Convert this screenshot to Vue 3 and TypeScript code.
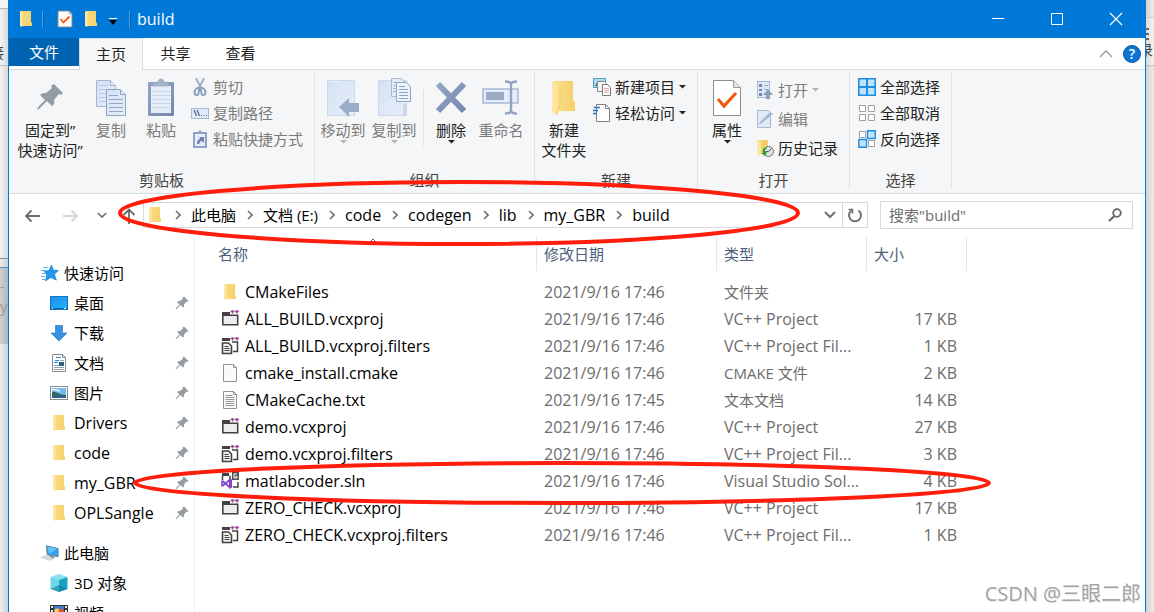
<script setup lang="ts">
interface Crumb { label: string; latin: boolean }
interface NavItem { label: string; icon: string; latin: boolean }
interface FileRow { name: string; icon: string; date: string; type: string; typeLatin: boolean; size: string }

const crumbs: Crumb[] = [
  { label: '此电脑', latin: false },
  { label: '文档 (E:)', latin: false },
  { label: 'code', latin: true },
  { label: 'codegen', latin: true },
  { label: 'lib', latin: true },
  { label: 'my_GBR', latin: true },
  { label: 'build', latin: true },
]

const pinned: NavItem[] = [
  { label: '桌面', icon: 'desktop', latin: false },
  { label: '下载', icon: 'download', latin: false },
  { label: '文档', icon: 'document', latin: false },
  { label: '图片', icon: 'picture', latin: false },
  { label: 'Drivers', icon: 'folder', latin: true },
  { label: 'code', icon: 'folder', latin: true },
  { label: 'my_GBR', icon: 'folder', latin: true },
  { label: 'OPLSangle', icon: 'folder', latin: true },
]

const computer: NavItem[] = [
  { label: '3D 对象', icon: 'cube', latin: false },
  { label: '视频', icon: 'video', latin: false },
]

const row = (name: string, icon: string, type: string, size: string, time = '17:46'): FileRow => ({
  name, icon, type, size, date: `2021/9/16 ${time}`, typeLatin: /^V/.test(type),
})

const files: FileRow[] = [
  row('CMakeFiles', 'folder', '文件夹', ''),
  row('ALL_BUILD.vcxproj', 'project', 'VC++ Project', '17 KB'),
  row('ALL_BUILD.vcxproj.filters', 'filters', 'VC++ Project Fil...', '1 KB'),
  row('cmake_install.cmake', 'blank', 'CMAKE 文件', '2 KB'),
  row('CMakeCache.txt', 'text', '文本文档', '14 KB', '17:45'),
  row('demo.vcxproj', 'project', 'VC++ Project', '27 KB'),
  row('demo.vcxproj.filters', 'filters', 'VC++ Project Fil...', '3 KB'),
  row('matlabcoder.sln', 'solution', 'Visual Studio Sol...', '4 KB'),
  row('ZERO_CHECK.vcxproj', 'project', 'VC++ Project', '17 KB'),
  row('ZERO_CHECK.vcxproj.filters', 'filters', 'VC++ Project Fil...', '1 KB'),
]
</script>

<template>
  <div class="screen">
    <svg class="defs" aria-hidden="true">
      <defs>
        <linearGradient id="gFold" x1="0" x2="1"><stop offset="0" stop-color="#fbdf8c" /><stop offset="1" stop-color="#f5cf69" /></linearGradient>
        <linearGradient id="gFlap" x1="0" x2="1"><stop offset="0" stop-color="#ffe9a8" /><stop offset="1" stop-color="#fbdd84" /></linearGradient>
        <linearGradient id="gBlue" x1="0" x2="1" y2="1"><stop offset="0" stop-color="#1f8fea" /><stop offset="1" stop-color="#1fb4ff" /></linearGradient>
        <linearGradient id="gSheet" x1="0" x2="1" y2="1"><stop offset="0" stop-color="#d5e1f3" /><stop offset="1" stop-color="#e6eefa" /></linearGradient>
        <linearGradient id="gSlate" x1="0" x2="1" y2="1"><stop offset="0" stop-color="#93a5c5" /><stop offset="1" stop-color="#7488ae" /></linearGradient>
      </defs>
      <symbol id="folder" viewBox="0 0 18 18">
        <path d="M4 1h10v11l1 1v3H4z" fill="url(#gFold)" />
        <path d="M3 1l4 2v11l-2 3-2-1z" fill="url(#gFlap)" />
        <path d="M7 3v11" stroke="#efcb70" stroke-width=".6" />
      </symbol>
      <symbol id="bigfolder" viewBox="0 0 28 40">
        <path d="M3 4h20v19l2 2v9H5z" fill="url(#gFold)" />
        <path d="M2 4l8 5v18l-3 11-5-3z" fill="url(#gFlap)" />
        <path d="M10 9v18l-3 11" fill="none" stroke="#edc768" stroke-width=".7" />
      </symbol>
      <symbol id="check" viewBox="0 0 18 18">
        <path d="M2 1h11l3 3v13H2z" fill="#fff" stroke="#8a8a8a" />
        <path d="M13 1v3h3" fill="#ddd" stroke="#999" stroke-width=".7" />
        <path d="M4.500 9l3 3.500 6-6" fill="none" stroke="#ee5a12" stroke-width="1.800" />
      </symbol>
      <symbol id="pin" viewBox="0 0 28 28">
        <path d="M18 1l9 9-2 2-2-1-5 6c1 3 0 5-2 6l-5-5-8 8-2 1 1-3 7-7-5-5c2-2 4-2 6-2l6-5-1-2z" fill="#949da3" />
      </symbol>
      <symbol id="copy" viewBox="0 0 32 40">
        <g fill="url(#gSheet)" stroke="#a4b5d2">
          <path d="M1.500 3.500h14l5 5v21h-19z" />
          <path d="M15.500 3.500v5h5" />
          <path d="M4 8.500h9M4 12.500h14M4 16.500h14M4 20.500h14M4 24.500h14" stroke="#b9c8e0" />
          <path d="M11.500 12.500h14l5 5v21h-19z" stroke="#8ea3c8" />
          <path d="M25.500 12.500v5h5" stroke="#8ea3c8" />
          <path d="M14 18.500h9M14 22.500h14M14 26.500h14M14 30.500h14M14 34.500h14" stroke="#93a6c8" />
        </g>
      </symbol>
      <symbol id="paste" viewBox="0 0 28 40">
        <rect x="1" y="5" width="26" height="34" rx="1" fill="url(#gSlate)" />
        <rect x="4" y="9" width="20" height="27" fill="#e5edf9" />
        <path d="M5 14.500h18M5 18.500h18M5 22.500h18M5 26.500h18M5 30.500h18" stroke="#c9d7ec" />
        <path d="M6 9V6l5-1c0-4 6-4 6 0l5 1v3z" fill="#a8b4ca" stroke="#8c9cba" stroke-width=".6" />
      </symbol>
      <symbol id="cut" viewBox="0 0 18 18">
        <path d="M5 0l5 10M13 0L8 10" fill="none" stroke="#a3afc4" stroke-width="2" />
        <path d="M8.500 10c-1-1-5 1-5 4 0 4 4 4 4 1zM9.500 10c1-1 5 1 5 4 0 4-4 4-4 1z" fill="none" stroke="#8ca0c2" stroke-width="2" />
      </symbol>
      <symbol id="path" viewBox="0 0 18 18">
        <rect x=".5" y="4.500" width="17" height="10" fill="#e2eaf7" stroke="#a9b9d5" />
        <path d="M3 6l2.500 6M6 6l2.500 6" stroke="#536b95" stroke-width="1.300" />
        <path d="M10 11.500h1M12.500 11.500h1M15 11.500h1" stroke="#536b95" />
      </symbol>
      <symbol id="shortcut" viewBox="0 0 18 18">
        <rect x="3" y="3" width="12" height="14" fill="#e7eef9" stroke="#8599bd" stroke-width="1.800" />
        <path d="M6 3.500V2h1.500c0-2 3-2 3 0H12v1.500z" fill="#8ea0be" />
        <path d="M6 14c0-3 1-5 3-5V7.500H7.500V7H13v5.500h-1L11 11c-2 0-2 1-3 3z" fill="#6c83ad" />
      </symbol>
      <symbol id="move" viewBox="0 0 34 40">
        <rect x="1.500" y="3.500" width="27" height="35" fill="url(#gSheet)" stroke="#ccd8eb" />
        <path d="M3 4.500h10" stroke="#edf3fb" />
        <path d="M13 30l10-9v5h10v9H23v5z" fill="#9cadc9" />
      </symbol>
      <symbol id="copyto" viewBox="0 0 34 40">
        <rect x="1.500" y="3.500" width="28" height="35" fill="url(#gSheet)" stroke="#ccd8eb" />
        <path d="M26 38V29l2-3h2v12z" fill="#cbd7ea" />
        <path d="M14.500 1.500h10l4 4v14h-14z" fill="#e3ebf8" stroke="#a9b9d4" />
        <path d="M16 5.500h7M16 8.500h3M16 11.500h3M16 14.500h3" stroke="#a9b9d4" />
        <path d="M19.500 5.500h10l4 4v15h-14z" fill="#edf3fc" stroke="#8fa4c7" />
        <path d="M22 9.500h6M22 12.500h9M22 15.500h9M22 18.500h9M22 21.500h9" stroke="#8fa4c7" />
      </symbol>
      <symbol id="delete" viewBox="0 0 32 40">
        <path d="M3 7l26 27M29 7L3 34" stroke="url(#gSlate)" stroke-width="6" />
      </symbol>
      <symbol id="rename" viewBox="0 0 38 40">
        <rect x="1" y="12" width="35" height="14" fill="#e4ecf9" stroke="#a8b9d6" stroke-width="1.500" />
        <rect x="4" y="15" width="18" height="8" fill="#9bacc9" />
        <path d="M23 4.500c4 0 6 1 6 3v26c0 2-2 3-6 3M35 4.500c-4 0-6 1-6 3M29 33.500c0 2 2 3 6 3" fill="none" stroke="#91a3c3" stroke-width="2.400" />
      </symbol>
      <symbol id="newitem" viewBox="0 0 18 18">
        <rect x=".5" y=".5" width="12" height="9" fill="#a9dcf5" stroke="#5b9cc0" />
        <path d="M2 8l3-5 3 5z" fill="#38795c" />
        <path d="M4.500 3.500h7l2 2v8h-9z" fill="#f4f4f4" stroke="#888" />
        <path d="M9.500 6.500h5l3 3v8h-8z" fill="#fff" stroke="#777" />
        <path d="M11 10.500h5M11 12.500h5M11 14.500h5" stroke="#dca7a4" />
      </symbol>
      <symbol id="easy" viewBox="0 0 18 18">
        <path d="M3.500.500h9l4 4v13h-13z" fill="#fff" stroke="#808080" />
        <path d="M12.500.500v4h4" fill="none" stroke="#808080" />
        <path d="M1 3.500h6M0 6.500h5M-1 9.500h5" stroke="#2776bd" stroke-width="1.400" />
      </symbol>
      <symbol id="properties" viewBox="0 0 30 40">
        <path d="M1.500 3.500h20l7 7v28h-27z" fill="#fff" stroke="#8c8c8c" />
        <path d="M21.500 3.500v7h7" fill="#e4e4e4" stroke="#999" />
        <path d="M6 22l6 7 12-13" fill="none" stroke="#ed5b12" stroke-width="3.200" />
      </symbol>
      <symbol id="open" viewBox="0 0 18 18">
        <rect x="1.500" y=".5" width="12" height="16" fill="#dfe8f6" stroke="#a8b8d2" />
        <path d="M3 3h3v3H3zM3 8h3v2H3zM3 12h3v3H3z" fill="#7388ac" />
        <path d="M8 4.500h4M8 8.500h4" stroke="#9dafcb" />
        <path d="M7 14l5-6 5 6h-3v4h-4v-4z" fill="#8c9fbe" />
      </symbol>
      <symbol id="edit" viewBox="0 0 18 18">
        <path d="M1.500.500h11l2 2v15h-13z" fill="#e2eaf7" stroke="#a8b8d2" />
        <path d="M3 15l1-3L14 2l3 2L6 13z" fill="#a9b9d3" />
      </symbol>
      <symbol id="history" viewBox="0 0 18 18">
        <path d="M2 1h10v14H4z" fill="#f5cf6d" /><path d="M1 1l4 2v12l-2 2-2-1z" fill="#ffe8a6" />
        <circle cx="12.500" cy="12.500" r="5" fill="#dce1df" stroke="#737b77" />
        <path d="M12.500 12.500l3-3M12.500 12.500h-3" stroke="#555" />
        <path d="M10 8c-3 1-4 3-3 6l-2 0 4 3 2-4H9c0-2 0-3 2-4z" fill="#26a331" />
      </symbol>
      <symbol id="selall" viewBox="0 0 18 18">
        <path d="M.8.800h16.400v16.400H.8z" fill="#bfe3fb" stroke="#1f8de0" stroke-width="1.600" />
        <path d="M9 1v16M1 9h16" stroke="#1f8de0" stroke-width="2" />
      </symbol>
      <symbol id="selnone" viewBox="0 0 18 18">
        <path d="M1.500 1.500h6v6h-6zM10.500 1.500h6v6h-6zM1.500 10.500h6v6h-6zM10.500 10.500h6v6h-6z" fill="#fff" stroke="#a0a0a0" />
      </symbol>
      <symbol id="selinv" viewBox="0 0 18 18">
        <path d="M1.500 1.500h6v6h-6zM10.500 10.500h6v6h-6z" fill="#fff" stroke="#a0a0a0" />
        <path d="M9.500.800h7.700v7.700H9.500zM.8 9.500h7.700v7.700H.8z" fill="#bfe3fb" stroke="#1f8de0" stroke-width="1.400" />
      </symbol>
      <symbol id="star" viewBox="0 0 18 18">
        <path d="M10.500 1l1.800 5 5.200.5-4 3.700 1.800 6L10 13.500 4.500 17l1.200-6.200L3 7l5-.5z" fill="#2298ea" stroke="#137bcb" stroke-width=".6" />
        <path d="M2 3.500h5M0 6.500h4M1 9.500h3M0 12.500h4M1 15.500h3" stroke="#5ab5f2" />
      </symbol>
      <symbol id="desktop" viewBox="0 0 18 18">
        <rect x=".5" y="2.500" width="17" height="13" fill="url(#gBlue)" stroke="#1374bd" />
        <path d="M1 14.500h16" stroke="#0f5e9d" /><path d="M2 14.500h1M14 14.500h2" stroke="#fff" />
      </symbol>
      <symbol id="download" viewBox="0 0 18 18"><path d="M5.500 1.500h7V9H17l-8 8-8-8h4.500z" fill="#3793e2" stroke="#2a7bc8" stroke-width=".7" /></symbol>
      <symbol id="document" viewBox="0 0 18 18">
        <path d="M2.500.500h10l3 3v14h-13z" fill="#fff" stroke="#8c8c8c" /><path d="M12.500.500v3h3" fill="none" stroke="#8c8c8c" />
        <path d="M6 3.500h5M5 6.500h4M4 8.500h4" stroke="#1e8fd5" /><path d="M10 6.500h4M4 11.500h5M4 13.500h10M4 15.500h10" stroke="#8ba3b1" /><path d="M9 8h5v4H9z" fill="#2e6184" />
      </symbol>
      <symbol id="picture" viewBox="0 0 18 18">
        <rect x=".5" y="2.500" width="17" height="13" fill="#fff" stroke="#8c8c8c" /><path d="M2 4h14v10H2z" fill="#75b9ee" />
        <path d="M2 8c5-1 6 3 14 3v3H2z" fill="#2f6a63" /><path d="M2 12c5-1 8 0 14 0v2H2z" fill="#2c628f" /><path d="M2 6c3-2 5 1 8 1" fill="none" stroke="#e7f5ff" stroke-width="1.500" />
      </symbol>
      <symbol id="pc" viewBox="0 0 20 18">
        <path d="M6 1l13 3v9L7 11z" fill="#29a7f4" stroke="#64737d" /><path d="M7 2l11 2-9 6z" fill="#61c4fb" />
        <path d="M10 12l5 1v2l-5-1z" fill="#8b969d" /><path d="M0 14l5-2 9 3-4 2z" fill="#dde2e5" stroke="#aab2b7" stroke-width=".7" />
      </symbol>
      <symbol id="cube" viewBox="0 0 18 18">
        <path d="M9 0l8.500 3L9 6 .5 3z" fill="#89e0ef" /><path d="M.5 3L9 6v12L.5 15z" fill="#6ed6e6" /><path d="M17.500 3L9 6v12l8.500-3z" fill="#17a3c4" /><path d="M.5 15L9 11l8.500 4L9 18z" fill="#0f7f9f" opacity=".6" />
      </symbol>
      <symbol id="video" viewBox="0 0 18 18">
        <path d="M0 1h18v16H0z" fill="#343434" /><path d="M4 2h10v13H4z" fill="#3d78d3" /><path d="M2 2v15M16 2v15" stroke="#fff" stroke-width="1.800" stroke-dasharray="2 2" />
        <circle cx="7" cy="7" r="2.500" fill="#ffd34d" /><circle cx="11" cy="7" r="2.500" fill="#e05a2c" /><path d="M4 10h10v4H4z" fill="#43a047" />
      </symbol>
      <symbol id="project" viewBox="0 0 18 18">
        <path d="M1 2h8v4H1z" fill="#424242" /><path d="M1.800 5.200h14.900v9.600H1.800z" fill="#ececef" stroke="#424242" stroke-width="1.600" />
        <path d="M9 0h9v4H9z" fill="#fff" /><path d="M9.500 1.500h4M11.500-.5v4M14 1.500h4M16-.5v4" stroke="#9b4f96" stroke-width="1.500" />
      </symbol>
      <symbol id="filters" viewBox="0 0 18 18">
        <path d="M1 1h8v3H1z" fill="#424242" /><path d="M11 5h5.500v9.500H12" fill="none" stroke="#424242" stroke-width="1.500" />
        <path d="M1.500 6h6l3 3v7.500h-9z" fill="#f0eff1" stroke="#424242" stroke-width="1.600" /><path d="M3.500 9.500h4M3.500 11.500h5M3.500 13.500h5" stroke="#424242" />
        <path d="M9.500 1.500h4M11.500-.5v4M14 1.500h4M16-.5v4" stroke="#9b4f96" stroke-width="1.500" />
      </symbol>
      <symbol id="blank" viewBox="0 0 18 18">
        <path d="M2.500.500h10l3 3v14h-13z" fill="#fafafa" stroke="#929292" /><path d="M12.500.500v3h3" fill="none" stroke="#929292" />
      </symbol>
      <symbol id="text" viewBox="0 0 18 18">
        <path d="M2.500.500h10l3 3v14h-13z" fill="#fafafa" stroke="#929292" /><path d="M12.500.500v3h3" fill="none" stroke="#929292" />
        <path d="M4.500 4.500h7M4.500 6.500h9M4.500 8.500h9M4.500 10.500h9M4.500 12.500h9M4.500 14.500h9" stroke="#8d8d8d" stroke-width=".9" />
      </symbol>
      <symbol id="solution" viewBox="0 0 18 18">
        <path d="M1 1h7v3H1z" fill="#424242" /><path d="M1.500 3v5M9 3.500v5M17 10v5h-5" fill="none" stroke="#424242" stroke-width="1.500" />
        <path d="M11 0h7v8h-7z" fill="#555" /><path d="M16 2h-3v4h3V4.500h-1.500" fill="none" stroke="#fff" />
        <path d="M1.500 9l7 6M1.500 14l7-6" stroke="#8445c9" stroke-width="1.700" /><path d="M8 6l3 1.500v8L8 17z" fill="#8445c9" /><path d="M1 8.500v6" stroke="#8445c9" stroke-width="1.600" />
      </symbol>
      <symbol id="chev" viewBox="0 0 6 10"><path d="M1 1l4 4-4 4" fill="none" stroke="#707070" stroke-width="1.600" /></symbol>
      <symbol id="down" viewBox="0 0 12 8"><path d="M1 1l5 5 5-5" fill="none" stroke="#707070" stroke-width="2" /></symbol>
      <symbol id="tri" viewBox="0 0 7 4"><path d="M0 0h7L3.500 3.500z" fill="currentColor" /></symbol>
    </svg>

    <div class="behind left" aria-hidden="true">
      <div class="b1"></div><div class="b2"><span>接</span></div><div class="b3"></div><div class="b4"></div>
      <div class="b5"><span>-</span><span>y</span></div><div class="b6"></div>
    </div>

    <main class="window">
      <header class="title">
        <svg class="s18"><use href="#folder" /></svg>
        <i class="tsep"></i>
        <button class="quick" aria-label="属性"><svg class="s18"><use href="#check" /></svg></button>
        <button class="quick" aria-label="新建文件夹"><svg class="s18"><use href="#folder" /></svg></button>
        <button class="quick more" aria-label="自定义快速访问工具栏"><svg width="8" height="7" viewBox="0 0 8 7"><path d="M0 .500h8" stroke="#fff" /><path d="M0 2h8L4 7z" fill="#000" /></svg></button>
        <i class="tsep"></i>
        <h1>build</h1>
        <div class="caption">
          <button aria-label="最小化"><svg width="14" height="14"><path d="M1 6.500h12" stroke="#fff" /></svg></button>
          <button aria-label="最大化"><svg width="14" height="14"><path d="M1.500 1.500h11v11h-11z" fill="none" stroke="#fff" /></svg></button>
          <button aria-label="关闭"><svg width="14" height="14"><path d="M1 1l12 12M13 1L1 13" stroke="#fff" stroke-width="1.200" /></svg></button>
        </div>
      </header>

      <nav class="tabs">
        <button class="file">文件</button>
        <button class="tab active">主页</button>
        <button class="tab">共享</button>
        <button class="tab">查看</button>
        <div class="tabend">
          <button aria-label="折叠功能区"><svg width="14" height="8"><path d="M1 7l6-6 6 6" fill="none" stroke="#999" stroke-width="1.300" /></svg></button>
          <button class="help" aria-label="帮助">?</button>
        </div>
      </nav>

      <section class="ribbon">
        <div class="group">
          <div class="cmds">
            <button class="big pinbtn"><span class="art"><svg width="28" height="28"><use href="#pin" /></svg></span>固定到”<br>快速访问”</button>
            <button class="big w40 off"><span class="art"><svg width="32" height="40"><use href="#copy" /></svg></span>复制</button>
            <button class="big w60 off"><span class="art"><svg width="28" height="40"><use href="#paste" /></svg></span>粘贴</button>
            <div class="stack">
              <button class="small off"><svg class="s18"><use href="#cut" /></svg>剪切</button>
              <button class="small off"><svg class="s18"><use href="#path" /></svg>复制路径</button>
              <button class="small off"><svg class="s18"><use href="#shortcut" /></svg>粘贴快捷方式</button>
            </div>
          </div>
          <div class="gname">剪贴板</div>
        </div>
        <div class="group g2">
          <div class="cmds">
            <button class="big w52 off"><span class="art"><svg width="34" height="40"><use href="#move" /></svg></span>移动到<svg class="tri"><use href="#tri" /></svg></button>
            <button class="big w50 off"><span class="art"><svg width="34" height="40"><use href="#copyto" /></svg></span>复制到<svg class="tri"><use href="#tri" /></svg></button>
            <i class="minisep"></i>
            <button class="big w54"><span class="art"><svg width="32" height="40"><use href="#delete" /></svg></span>删除<svg class="tri"><use href="#tri" /></svg></button>
            <button class="big w46 off"><span class="art"><svg width="38" height="40"><use href="#rename" /></svg></span>重命名</button>
          </div>
          <div class="gname">组织</div>
        </div>
        <div class="group g3">
          <div class="cmds">
            <button class="big w58"><span class="art"><svg width="28" height="40"><use href="#bigfolder" /></svg></span>新建<br>文件夹</button>
            <div class="stack">
              <button class="small"><svg class="s18"><use href="#newitem" /></svg>新建项目<svg class="tri"><use href="#tri" /></svg></button>
              <button class="small"><svg class="s18"><use href="#easy" /></svg>轻松访问<svg class="tri"><use href="#tri" /></svg></button>
            </div>
          </div>
          <div class="gname">新建</div>
        </div>
        <div class="group g4">
          <div class="cmds">
            <button class="big w58"><span class="art"><svg width="30" height="40"><use href="#properties" /></svg></span>属性<svg class="tri"><use href="#tri" /></svg></button>
            <div class="stack tall">
              <button class="small off"><svg class="s18"><use href="#open" /></svg>打开<svg class="tri"><use href="#tri" /></svg></button>
              <button class="small off"><svg class="s18"><use href="#edit" /></svg>编辑</button>
              <button class="small"><svg class="s18"><use href="#history" /></svg>历史记录</button>
            </div>
          </div>
          <div class="gname">打开</div>
        </div>
        <div class="group g5">
          <div class="cmds">
            <div class="stack">
              <button class="small"><svg class="s18"><use href="#selall" /></svg>全部选择</button>
              <button class="small"><svg class="s18"><use href="#selnone" /></svg>全部取消</button>
              <button class="small"><svg class="s18"><use href="#selinv" /></svg>反向选择</button>
            </div>
          </div>
          <div class="gname">选择</div>
        </div>
      </section>

      <section class="addressrow">
        <div class="history">
          <button aria-label="后退"><svg width="16" height="14"><path d="M7.500 1.500L2 7l5.500 5.500M2 7h14" fill="none" stroke="#6b6b6b" stroke-width="1.800" /></svg></button>
          <button aria-label="前进"><svg width="16" height="14"><path d="M8.500 1.500L14 7l-5.500 5.500M14 7H0" fill="none" stroke="#d3d3d3" stroke-width="1.800" /></svg></button>
          <button class="recent" aria-label="最近位置"><svg width="10" height="7"><use href="#down" /></svg></button>
          <button class="up" aria-label="上移"><svg width="14" height="16"><path d="M1.500 7L7 1.500 12.500 7M7 2v14" fill="none" stroke="#6b6b6b" stroke-width="1.800" /></svg></button>
        </div>
        <div class="address">
          <svg class="s18"><use href="#folder" /></svg>
          <template v-for="crumb in crumbs" :key="crumb.label">
            <svg class="chev"><use href="#chev" /></svg>
            <a href="#" :class="{ latin: crumb.latin }">{{ crumb.label }}</a>
          </template>
          <button class="drop" aria-label="以前的位置"><svg width="12" height="8"><use href="#down" /></svg></button>
          <button class="refresh" aria-label="刷新"><svg width="16" height="16"><path d="M4.500 3.500a6 6 0 1 0 7 0" fill="none" stroke="#707070" stroke-width="2" /><path d="M1.500 2.500h4v4" fill="none" stroke="#707070" stroke-width="1.600" /></svg></button>
        </div>
        <label class="search">
          <input type="text" aria-label="搜索" placeholder="搜索&quot;build&quot;">
          <svg width="14" height="14"><circle cx="9" cy="5" r="3.800" fill="none" stroke="#666" stroke-width="1.800" /><path d="M6.500 8L1 13" stroke="#666" stroke-width="2.200" /></svg>
        </label>
      </section>

      <section class="content">
        <nav class="tree">
          <a href="#" class="root"><svg class="s18"><use href="#star" /></svg>快速访问</a>
          <a v-for="item in pinned" :key="item.label" href="#" class="leaf" :class="{ latin: item.latin }">
            <svg class="s18"><use :href="'#' + item.icon" /></svg>{{ item.label }}<svg class="pin"><use href="#pin" /></svg>
          </a>
          <a href="#" class="root second"><svg class="s18"><use href="#pc" /></svg>此电脑</a>
          <a v-for="item in computer" :key="item.label" href="#" class="leaf">
            <svg class="s18"><use :href="'#' + item.icon" /></svg>{{ item.label }}
          </a>
        </nav>
        <div class="list">
          <table>
            <colgroup><col class="cname"><col class="cdate"><col class="ctype"><col class="csize"></colgroup>
            <thead>
              <tr>
                <th class="sorted">名称<svg width="8" height="5"><path d="M1 4l3-3 3 3" fill="none" stroke="#666" /></svg></th>
                <th>修改日期</th><th>类型</th><th>大小</th>
              </tr>
            </thead>
            <tbody>
              <tr v-for="file in files" :key="file.name">
                <td class="latin"><span class="fname"><svg class="s18"><use :href="'#' + file.icon" /></svg>{{ file.name }}</span></td>
                <td class="latin">{{ file.date }}</td>
                <td :class="{ latin: file.typeLatin }">{{ file.type }}</td>
                <td class="latin num">{{ file.size }}</td>
              </tr>
            </tbody>
          </table>
        </div>
      </section>
    </main>

    <div class="behind right" aria-hidden="true">
      <div class="r1"></div><div class="r2"><i></i><i></i><i></i><span>录</span></div><div class="r3"></div>
    </div>

    <svg class="marks" viewBox="0 0 1154 612" aria-hidden="true">
      <ellipse cx="459" cy="213" rx="339" ry="31" />
      <ellipse cx="562" cy="483" rx="427" ry="20" />
    </svg>
    <div class="watermark">CSDN @三眼二郎</div>
  </div>
</template>

<style>
html, body { margin: 0; overflow: hidden; }
</style>

<style scoped>
.screen {
  position: relative; display: grid; grid-template-columns: 8px minmax(0, 1fr) 8px; height: 100vh; overflow: hidden;
  background: #e6e6e6; color: #000; font: 15px/20px "Open Sans", "Noto Sans CJK SC", sans-serif;
}
.screen * { box-sizing: border-box; }
.defs { position: absolute; width: 0; height: 0; }
svg { display: block; flex: none; }
button { display: flex; align-items: center; padding: 0; border: 0; background: none; color: inherit; font: inherit; }
a { color: inherit; text-decoration: none; }
.latin { font-size: 16px; }
.s18 { width: 18px; height: 18px; }
.tri { width: 7px; height: 4px; }

.behind { overflow: hidden; color: #444; display: flex; flex-direction: column; }
.behind div { flex: none; }
.left { background: linear-gradient(90deg, #ededed, #cfcfcf); }
.b1 { height: 9px; background: #f4f4f4; border-bottom: 1px solid #b5b5b5; }
.b2 { height: 57px; padding-top: 34px; border-bottom: 1px solid #c6c6c6; background: linear-gradient(90deg, #f4f4f4, #d8d8d8); }
.b2 span { display: block; width: 4px; direction: rtl; font-size: 14px; white-space: nowrap; }
.b3 { height: 193px; border-bottom: 1px solid #8d8d8d; background: linear-gradient(90deg, #f4f4f4, #d8d8d8); }
.b4 { height: 9px; border-bottom: 1px solid #4a90c4; }
.b5 { height: 76px; padding-top: 8px; background: linear-gradient(90deg, #cfcfcf, #b5b5b5); color: #999; }
.b5 span { display: block; }
.b6 { height: 268px; }
.right { background: linear-gradient(90deg, #d2d2d2, #ececec); }
.r1 { height: 18px; border-bottom: 1px solid #c9c9c9; }
.r2 { height: 48px; padding-top: 10px; border-bottom: 1px solid #c0c0c0; background: linear-gradient(90deg, #dcdcdc, #f4f4f4); }
.r2 i { display: block; width: 3px; height: 2px; margin-bottom: 3px; background: #666; }
.r2 span { display: flex; justify-content: flex-end; width: 7px; font-size: 14px; line-height: 14px; }

.window { display: flex; flex-direction: column; min-width: 0; border: solid #0078d7; border-width: 0 1px; background: #fff; }
.title { display: flex; align-items: center; flex: none; height: 38px; padding-left: 8px; background: #0078d7; color: #fff; }
.tsep { width: 2px; height: 17px; margin: 0 12px 0 7px; border: 1px solid #4a9fe2; border-right-color: #0560a8; }
.quick { margin-right: 8px; }
.quick.more { margin: 4px 5px 0 1px; }
.title h1 { margin: 0 0 0 -6px; font-size: 16px; font-weight: 400; }
.caption { display: flex; margin-left: auto; }
.caption button { justify-content: center; width: 59px; height: 38px; }

.tabs { display: flex; flex: none; height: 32px; border-bottom: 1px solid #dadbdc; color: #222; }
.tabs > button { justify-content: center; height: 30px; }
.tabs .file { width: 70px; height: 28px; background: #0063b1; color: #fff; }
.tabs .tab { width: 65px; }
.tabs .active { width: 64px; height: 32px; padding-bottom: 2px; border: 1px solid #dadbdc; border-bottom: 0; background: #f5f6f7; }
.tabend { display: flex; align-items: center; gap: 10px; margin-left: auto; padding-right: 4px; }
.tabend .help { justify-content: center; width: 18px; height: 18px; border: 1px solid #0a5aa0; border-radius: 50%; background: #0b76d6; color: #fff; font-size: 14px; font-weight: 600; }

.ribbon { display: flex; flex: none; height: 124px; padding: 2px 0 4px; border-bottom: 1px solid #dadbdc; background: #f5f6f7; color: #222; }
.group { display: flex; flex-direction: column; flex: none; width: 306px; border-right: 1px solid #e1e2e3; }
.g2 { width: 220px; }
.g2 .cmds { padding-left: 2px; }
.g3 { width: 163px; }
.g4 { width: 152px; }
.g5 { width: 102px; }
.g5 .cmds { padding-left: 8px; }
.cmds { display: flex; flex: 1; align-items: flex-start; }
.gname { height: 18px; line-height: 18px; text-align: center; color: #444; }
.big { display: block; flex: none; width: 82px; padding-top: 2px; white-space: nowrap; text-align: center; }
.big .tri { margin: 0 auto; }
.art { display: flex; align-items: center; justify-content: center; height: 46px; }
.w40 { width: 40px; } .w46 { width: 46px; } .w50 { width: 50px; } .w52 { width: 52px; }
.w54 { width: 54px; } .w58 { width: 58px; } .w60 { width: 60px; }
.off { color: #7b7b7b; }
.off .tri { color: #b4b4b4; }
.minisep { width: 1px; height: 56px; margin: 18px 0 0 4px; background: #e1e2e3; }
.stack { padding-top: 2px; }
.small { gap: 4px; height: 26px; white-space: nowrap; }
.tall .small { height: 29px; }
.stack.tall { padding-top: 3px; }

.addressrow { display: flex; align-items: center; flex: none; height: 43px; padding: 0 12px 2px 15px; }
.history { display: flex; align-items: center; flex: none; width: 119px; padding-top: 2px; }
.history button { margin-right: 23px; }
.history .recent { margin: 0 15px 0 -5px; }
.history .up { margin: 0; }
.address { display: flex; align-items: center; flex: 1; height: 26px; border: 1px solid #d9d9d9; white-space: nowrap; }
.address > .s18 { margin: 0 0 0 2px; }
.chev { width: 6px; height: 10px; margin: 0 10px 0 11px; }
.drop { margin: 0 6px 0 auto; }
.refresh { justify-content: center; width: 25px; height: 24px; border-left: 1px solid #d9d9d9; }
.search { display: flex; align-items: center; flex: none; width: 23%; max-width: 253px; height: 28px; margin-left: 12px; padding: 0 10px 0 8px; border: 1px solid #d9d9d9; }
.search input { flex: 1; min-width: 0; padding: 0; border: 0; outline: 0; background: none; font: inherit; }
.search input::placeholder { color: #6d6d6d; opacity: 1; }

.content { display: flex; flex: 1; min-height: 0; }
.tree { flex: none; width: 186px; padding-top: 21px; border-right: 1px solid #f0f0f0; overflow: hidden; }
.tree a { display: flex; align-items: center; gap: 6px; height: 30px; padding-left: 41px; white-space: nowrap; }
.tree .root { gap: 5px; padding-left: 32px; }
.tree .second { margin-top: 10px; }
.tree .pin { width: 14px; height: 14px; margin: 0 5px 0 auto; }
.list { flex: 1; min-width: 0; overflow: hidden; }
table { width: 772px; table-layout: fixed; border-collapse: separate; border-spacing: 0; }
.cname { width: 342px; } .cdate { width: 180px; } .ctype { width: 150px; } .csize { width: 100px; }
th { position: relative; height: 34px; padding: 0 0 0 7px; border-right: 1px solid #e5e5e5; color: #4c607a; font-weight: 400; text-align: left; }
th.sorted { padding-left: 23px; }
th svg { position: absolute; top: 1px; left: 51%; }
tbody::before { content: ""; display: block; height: 7px; }
td { height: 27px; padding: 0 0 0 7px; color: #6d6d6d; white-space: nowrap; }
.fname { display: flex; align-items: center; gap: 6px; padding-left: 19px; color: #000; }
.num { padding: 0 10px 0 0; text-align: right; }

.marks { position: absolute; inset: 0; width: 1154px; height: 612px; pointer-events: none; }
.marks ellipse { fill: none; stroke: #ff1d0c; stroke-width: 4; }
.watermark { position: absolute; right: 13px; bottom: 4px; color: #a3a3a3; font-size: 20px; line-height: 28px; text-shadow: 1px 1px #ececec; }
</style>
